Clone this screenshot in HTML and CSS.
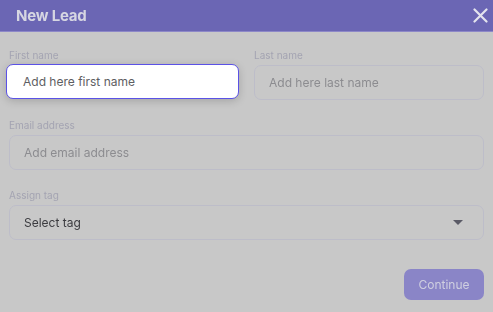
FILE: index.html
```html
<!DOCTYPE html>
<html>
<head>
<meta charset="utf-8">
<link rel="stylesheet" href="styles.css">
</head>
<body>
<div class="modal">
  <header class="head blur">
    <span class="title">New Lead</span>
    <svg class="close" width="15" height="15" viewBox="0 0 15 15"><path d="M1.5 1.5 L13.5 13.5 M13.5 1.5 L1.5 13.5" stroke="#e4e4ee" stroke-width="2.2" stroke-linecap="round"/></svg>
  </header>
  <div class="form">
    <div class="row two">
      <div class="field">
        <label class="label blur">First name</label>
        <div class="input focus">Add here first name</div>
      </div>
      <div class="field right">
        <label class="label blur">Last name</label>
        <div class="input blur">Add here last name</div>
      </div>
    </div>
    <div class="field">
      <label class="label blur">Email address</label>
      <div class="input blur">Add email address</div>
    </div>
    <div class="field">
      <label class="label blur">Assign tag</label>
      <div class="input select blur"><span>Select tag</span><span class="caret"></span></div>
    </div>
    <div class="actions">
      <button class="btn blur">Continue</button>
    </div>
  </div>
</div>
</body>
</html>
```
FILE: styles.css
```css
html, body { margin: 0; padding: 0; }
body {
  width: 493px; height: 312px; overflow: hidden;
  background: #c8c8c8;
  font-family: Inter, "Noto Sans", sans-serif;
}
.blur { filter: blur(0.7px); }
.head {
  height: 31px; background: #6b66b4;
  display: flex; align-items: center; justify-content: space-between;
  padding: 0 5px 0 16px;
  border-bottom: 1px solid #8d88c8;
}
.title { color: #d6d6e2; font-weight: 700; font-size: 15px; letter-spacing: -0.2px; }
.form { padding: 17px 9px 0 9px; display: flex; flex-direction: column; }
.row.two { display: grid; grid-template-columns: 230px 230px; column-gap: 15px; }
.field { display: flex; flex-direction: column; margin-bottom: 19px; }
.label { font-size: 10px; color: #a4a4b2; height: 12px; line-height: 12px; margin-bottom: 4px; }
.input {
  height: 35px; box-sizing: border-box;
  border: 1px solid #bdbdc9; border-radius: 7px;
  padding: 0 14px; display: flex; align-items: center;
  font-size: 12px; color: #8c8c90;
}
.focus {
  background: #fff; border: 1px solid #5b52e6; color: #5e5e62;
  margin-left: -3px; margin-top: -1px; width: 233px;
  padding-left: 16px;
  box-shadow: 0 2px 8px rgba(0,0,0,0.18);
  position: relative;
}
.select { justify-content: space-between; color: #3c3c40; padding-right: 20px; }
.caret { width: 0; height: 0; border-left: 5px solid transparent; border-right: 5px solid transparent; border-top: 5px solid #5a5a66; }
.actions { display: flex; justify-content: flex-end; margin-top: 10px; }
.btn {
  width: 80px; height: 31px; border: none; border-radius: 7px;
  background: #8a85c7; color: #cfcfe0; font-family: inherit; font-size: 12px;
}
```
